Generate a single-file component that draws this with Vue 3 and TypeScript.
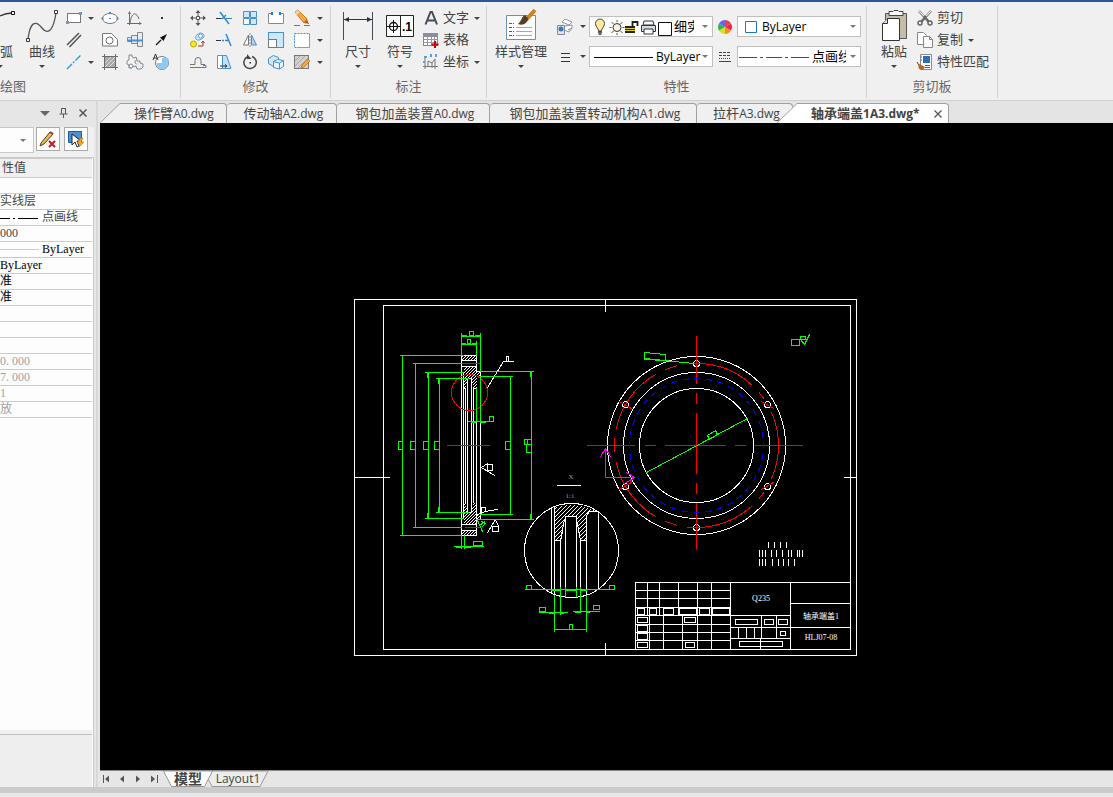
<script setup lang="ts">
import { ref } from 'vue'

interface Tool { name: string; icon: string; menu?: boolean }
interface DocTab { title: string; file: string; width: number }
interface Prop { text: string; kind?: 'dash' | 'solid'; tone?: 'dark' | 'dim' }

const grey = 'fill="none" stroke="#6b6b6b"'
const blue = 'fill="none" stroke="#2f86d6"'

const drawTools: Tool[] = [
  { name: '矩形', menu: true, icon: `<rect x="3.500" y="5.500" width="13" height="9" fill="#fff" stroke="#777"/><path d="M2 13h3v3h-3zM15 4h3v3h-3z" fill="#7a94b0"/>` },
  { name: '椭圆', icon: `<ellipse cx="10" cy="10.500" rx="7.500" ry="5" fill="#fff" stroke="#777"/><path d="M9 4h2v2h-2zM1.500 9.500h2v2h-2zM16.500 9.500h2v2h-2zM9 10h2v1h-2z" fill="#4a80b8"/>` },
  { name: '函数曲线', icon: `<path d="M4.500 4v13M2 15.500h14M5 15c2-13 7-10 9-4" ${grey}/><path d="M3 6l1.500-3L6 6zM14 14l3 1.500-3 1.500z" fill="#6b6b6b"/>` },
  { name: '点', icon: `<path d="M10 9h2v2h-2z" fill="#333"/>` },
  { name: '平行线', icon: `<path d="M3 15L15 3M5.500 17L17 5" fill="none" stroke="#555" stroke-width="1.500"/>` },
  { name: '局部放大', icon: `<path d="M2.500 3.500h9l6 6v6.500h-15z" fill="#fff" stroke="#777"/><circle cx="9.500" cy="10.500" r="3.500" ${grey}/>` },
  { name: '轴', icon: `<path d="M2.500 7.500h4v-2h6v-3h5v14h-5v-3h-6v-2h-4z" fill="#e4ecf4" stroke="#888"/><path d="M3 10.500h15" stroke="#4a90d4" stroke-width="2"/><path d="M6.500 7v5M12.500 5v9" stroke="#777"/>` },
  { name: '箭头', icon: `<path d="M5 15l5-5" stroke="#222" stroke-width="1.500"/><path d="M16 4l-7 3.500 3.500 3.500z" fill="#111"/>` },
  { name: '中心线', menu: true, icon: `<path d="M3 17L17 3" fill="none" stroke="#1f9bd8" stroke-width="1.300" stroke-dasharray="7 1.500 2 1.500"/>` },
  { name: '剖面线', icon: `<rect x="4.500" y="4.500" width="11" height="11" fill="#a8a8a8" stroke="#888"/><path d="M2 4.500h16M2 15.500h16M4.500 2v16M15.500 2v16" stroke="#6b6b6b"/><path d="M5 11l6-6M5 15l10-10M9 15l6-6" stroke="#eee" stroke-width=".8"/>` },
  { name: '齿轮', icon: `<path d="M4 3h3v2l2 1 2-1 1 3-2 1v2l2 1-2 3-2-1-1 2h-3v-3l-2-1v-3l2-1z" fill="#f5f5f5" stroke="#888"/><path d="M12 9h3v2l3 1v3l-2 2h-4l-1-3" fill="#e6eef6" stroke="#888"/><circle cx="6" cy="14" r="2" fill="#fff" stroke="#888"/>` },
  { name: '文字填充', icon: `<circle cx="11" cy="11" r="6.500" fill="#fff" stroke="#777"/><path d="M11 6v5h-5.500a6 6 0 0 0 12 1V6z" fill="#8fc9ef"/><path d="M2 8l2.500-6L7 8M3 6h3" fill="none" stroke="#333"/>` },
]

const editTools: Tool[] = [
  { name: '移动', icon: `<path d="M10 2l2.500 3h-5zM10 18l2.500-3h-5zM2 10l3-2.500v5zM18 10l-3-2.500v5z" fill="#555"/><path d="M8.500 8.500h3v3h-3z" fill="#fff" stroke="#555"/><path d="M10 5v3M10 12v3M5 10h3M12 10h3" stroke="#555"/>` },
  { name: '裁剪', icon: `<path d="M2 10.500h6M12 10.500h6" stroke="#2f86d6"/><path d="M2 10.500h5" stroke="#333"/><path d="M6 4l9 12M8 11l4-4" stroke="#2f86d6" stroke-width="1.500" fill="none"/>` },
  { name: '阵列', icon: `<path d="M3.500 3.500h6v6h-6zM10.500 3.500h6v6h-6zM10.500 10.500h6v6h-6z" fill="#cce8fa" stroke="#4a90c4"/><path d="M3.500 10.500h6v6h-6z" fill="#fff" stroke="#4a90c4"/>` },
  { name: '打断', icon: `<path d="M6 5.500H2.500v10h15v-10H14" fill="#fff" stroke="#8a8a8a"/><path d="M5 4h2v3h-2zM13 4h2v3h-2z" fill="#1f78c8"/>` },
  { name: '删除', menu: true, icon: `<path d="M3 4l3-2 9 9-3 4z" fill="#f5a93b" stroke="#c47b1a"/><path d="M3 4l3-2 2 2-3 3z" fill="#e8d2b0"/><path d="M12 15l3-4 2 5z" fill="#b5651d"/><path d="M2 17.500h6M12 17.500h6" stroke="#777"/>` },
  { name: '平移复制', icon: `<circle cx="5.500" cy="14" r="3" fill="#f6ea1c" stroke="#b5a800"/><path d="M8 9c-1-4 1-4 4-6 4 0 5 3 3 5-3 2-5 3-7 1z" fill="#d4ebfa" stroke="#5a9fd0"/><circle cx="12.500" cy="6" r="2" fill="#fff" stroke="#5a9fd0"/><path d="M10 16h5v-4M13.500 13l1.500-2 1.500 2" fill="none" stroke="#a33"/>` },
  { name: '延伸', icon: `<path d="M2 10.500h5" stroke="#333"/><path d="M8 10.500h2M11 10.500h3" stroke="#2f86d6" stroke-width="1.500"/><path d="M12 4l5 12" stroke="#2f86d6" stroke-width="1.500"/>` },
  { name: '镜像', icon: `<path d="M8.500 5v10h-5z" fill="#f8f8f8" stroke="#777"/><path d="M11.500 5v10h5z" fill="#a9d4f2" stroke="#4a90c4"/><path d="M10 3v14" stroke="#888" stroke-dasharray="2 1"/>` },
  { name: '缩放', icon: `<rect x="2.500" y="2.500" width="15" height="15" fill="#cce8fa" stroke="#4a90c4"/><rect x="2.500" y="9.500" width="8" height="8" fill="#fff" stroke="#777"/>` },
  { name: '拉伸', menu: true, icon: `<rect x="2.500" y="3.500" width="15" height="14" fill="#fff" stroke="#4a90d4" stroke-dasharray="2 1"/><path d="M5 17.500h12.500V6" fill="none" stroke="#999"/>` },
  { name: '等距线', icon: `<path d="M2 12.500h5V8.500a3 3 0 0 1 6 0v4h4" fill="none" stroke="#777"/><path d="M2 15.500h16v-2h-3" ${blue}/>` },
  { name: '偏移', icon: `<path d="M3.500 3.500h5v13h-5z" fill="#fff" stroke="#888"/><path d="M8.500 3.500h4l4.500 13h-8.500z" fill="#bfe0f6" stroke="#4a90c4"/><path d="M6 14h7M11 12.500l2 1.500-2 1.500" fill="none" stroke="#333"/>` },
  { name: '旋转', icon: `<path d="M7 5a6.200 6.200 0 1 0 5-.5" fill="none" stroke="#444" stroke-width="1.500"/><path d="M7 2v5h4.500z" fill="#444"/><path d="M9.500 10h1.500v1.500H9.500z" fill="#333"/>` },
  { name: '块', icon: `<path d="M2.500 6.500l5-3 5 2v7l-5 2-5-3z" fill="#cce8fa" stroke="#4a90c4"/><path d="M7.500 9.500l4-2 6 1v6l-4 2.500-6-1.500z" fill="#e6f4fd" stroke="#4a90c4"/><path d="M7.500 9.500l6 1.500 4-2.500M13.500 11v6" fill="none" stroke="#4a90c4"/>` },
  { name: '编辑填充', menu: true, icon: `<rect x="2.500" y="3.500" width="14" height="13" fill="#d0d0d0" stroke="#777"/><path d="M3 9l5-5M3 14l10-10M6 16l10-10" stroke="#aaa"/><path d="M10 13l6-6 2 2-6 6-3 1z" fill="#f5a93b" stroke="#b5651d" stroke-width=".7"/>` },
]

const noteTools: Tool[] = [
  { name: '文字', menu: true, icon: `<path d="M4.500 16.500L9.500 4h1.500l5 12.500M6.500 12.500h8" fill="none" stroke="#444c55" stroke-width="2"/>` },
  { name: '表格', icon: `<rect x="2.500" y="3.500" width="14" height="12" fill="#fff" stroke="#888"/><path d="M2 3h15v4H2z" fill="#8a9099"/><path d="M3 9.500h13M3 12.500h13M6.500 7v8M10.500 7v8M13.500 7v8" stroke="#999"/><path d="M14 11v7M10.500 14.500h7" stroke="#c00" stroke-width="2"/>` },
  { name: '坐标', menu: true, icon: `<path d="M4 6v11M2 14.500h15M7 14V9l4 2 3-4M11 11v5M14 7v10" fill="none" stroke="#777"/><path d="M3 4h3v2h-3zM9 2h2v3h-2zM14 2h2v3h-2zM2 9h2v2h-2z" fill="#5aa0e0"/>` },
]

const clipTools: Tool[] = [
  { name: '剪切', icon: `<path d="M4 3l10 11M16 3L6 14" stroke="#666" stroke-width="2.500"/><circle cx="5" cy="15" r="2" fill="#eee" stroke="#666" stroke-width="1.500"/><circle cx="15" cy="15" r="2" fill="#eee" stroke="#666" stroke-width="1.500"/><path d="M4 3l5 5M16 3l-5 5" stroke="#e8e8e8" stroke-width="1.200"/>` },
  { name: '复制', menu: true, icon: `<path d="M2.500 2.500h6l3 3v9h-9z" fill="#fff" stroke="#888"/><path d="M8.500 6.500h6l3 3v8h-9z" fill="#fff" stroke="#888"/><path d="M14.500 6.500v3h3" fill="none" stroke="#888"/>` },
  { name: '特性匹配', icon: `<path d="M5.500 2.500h11v15h-11z" fill="#fff" stroke="#889"/><path d="M8 4h7v7H8z" fill="#2e6fb0"/><path d="M6 5h1M6 8h1M10 13.500h5M10 15.500h5" stroke="#557"/><path d="M3 12l3 1 4 2-2 3-4-1z" fill="#b5651d"/><path d="M2 10l2 3" stroke="#7a3c08"/>` },
]

const tabs: DocTab[] = [
  { title: '操作臂', file: 'A0.dwg', width: 127 },
  { title: '传动轴', file: 'A2.dwg', width: 110 },
  { title: '钢包加盖装置', file: 'A0.dwg', width: 153 },
  { title: '钢包加盖装置转动机构', file: 'A1.dwg', width: 207 },
  { title: '拉杆', file: 'A3.dwg', width: 96 },
]

const props: Prop[] = [
  { text: '' },
  { text: '实线层' },
  { text: '点画线', kind: 'dash' },
  { text: '000' },
  { text: 'ByLayer', kind: 'solid', tone: 'dark' },
  { text: 'ByLayer', tone: 'dark' },
  { text: '准', tone: 'dark' },
  { text: '准', tone: 'dark' },
  { text: '' },
  { text: '' },
  { text: '' },
  { text: '0. 000', tone: 'dim' },
  { text: '7. 000', tone: 'dim' },
  { text: '1', tone: 'dim' },
  { text: '放', tone: 'dim' },
]

const layer = ref('细实线')
const color = ref('ByLayer')
const weight = ref('ByLayer')
const linetype = ref('点画线')

const cx = 696
const cy = 445

/* Arc on the flange face; angles run clockwise from twelve o'clock. */
function arc(r: number, from: number, to: number): string {
  const p = (a: number) => {
    const t = (a * Math.PI) / 180
    return `${(cx + r * Math.sin(t)).toFixed(1)} ${(cy - r * Math.cos(t)).toFixed(1)}`
  }
  return `M${p(from)}A${r} ${r} 0 0 1 ${p(to)}`
}

const pitchArcs = [
  [0, 42], [50, 55], [66, 114], [125, 130], [138, 186], [194, 202],
  [210, 258], [266, 275], [282, 330], [338, 346], [355, 360],
].map(([a, b]) => arc(82, a, b)).join('')

const holes = [[696, 363], [767, 404], [767, 486], [696, 527], [625, 486], [625, 404]]
const holeMarks = 'M761 401l12 7M761 489l12-7M619 489l12-7M619 401l12 7M690 363h12M690 527h12'

const noteTicks =
  [768, 774, 780, 786].map(x => `M${x} 542v5`).join('') +
  [759, 762, 765, 771, 776, 782, 788, 791, 797, 799, 802].map(x => `M${x} 550v6`).join('') +
  [759, 762, 765, 772, 778, 783, 788, 794].map(x => `M${x} 559v6`).join('')

const titleLines =
  [590, 598, 607, 615, 624, 632, 640].map(y => `M635 ${y}H730`).join('') +
  [647, 659, 678, 697, 711].map(x => `M${x} 582V615`).join('') +
  [649, 663, 682, 697, 711].map(x => `M${x} 615V649`).join('') +
  'M635 649V582H850M730 582V649M790 582V649M730 615H790M730 627H850M730 638H790M790 603H850' +
  'M761 615V638M776 615V638M738 627V638M746 627V638M754 627V638M760 638V649'

const titleBoxes = [
  [637, 608, 7, 6], [649, 608, 7, 6], [663, 608, 10, 6], [679, 608, 17, 6], [699, 608, 10, 6], [712, 608, 17, 6],
  [637, 617, 10, 5], [637, 625, 10, 6], [637, 633, 10, 6], [637, 642, 10, 5],
  [684, 617, 11, 5], [685, 642, 9, 5], [735, 619, 22, 5], [764, 619, 9, 5], [778, 619, 9, 5],
  [780, 631, 5, 4], [739, 641, 43, 5],
]

const dimBoxes = [
  [398, 441, 4, 8], [410, 441, 5, 8], [423, 441, 5, 8], [434, 441, 5, 8], [505, 441, 5, 8],
  [524, 439, 7, 5], [526, 444, 5, 8], [469, 331, 4, 4], [467, 339, 3, 4], [489, 416, 4, 5],
  [473, 541, 9, 4], [526, 585, 5, 4], [609, 585, 5, 4], [569, 624, 3, 5], [539, 607, 6, 4],
  [593, 605, 6, 4], [791, 339, 8, 6], [800, 336, 5, 3],
]
</script>

<template>
  <div class="app">
    <header class="ribbon">
      <section class="group group-draw">
        <div class="tools">
          <button class="big big-edge" type="button" aria-label="圆弧">
            <svg width="20" height="36" viewBox="0 0 20 36"><path d="M0 9C4 7 8 6 12 6" fill="none" stroke="#333" stroke-width="1.300" /><path d="M11.500 4.500h3v3h-3z" fill="#fff" stroke="#111" /></svg>
            <span>弧</span>
            <svg width="4" height="7" viewBox="0 0 4 7"><path d="M0 4h3L0 7z" fill="#444" /></svg>
          </button>
          <button class="big" type="button">
            <svg width="36" height="36" viewBox="0 0 36 36"><path d="M4 32c2-16 7-20 14-11s12-1 14-15" fill="none" stroke="#555" stroke-width="1.300" /><path d="M2.500 31.500h3v3h-3zM30.500 3.500h3v3h-3z" fill="#fff" stroke="#333" /></svg>
            <span>曲线</span><i class="caret"></i>
          </button>
          <div class="grid grid-draw">
            <template v-for="(t, i) in drawTools" :key="t.name">
              <button class="tool" type="button" :aria-label="t.name"><svg width="20" height="20" viewBox="0 0 20 20" v-html="t.icon"></svg></button>
              <span v-if="i % 4 === 0" class="drop"><i v-if="t.menu" class="caret"></i></span>
            </template>
          </div>
        </div>
        <h2>绘图</h2>
      </section>

      <section class="group group-edit">
        <div class="tools">
          <div class="grid grid-edit">
            <template v-for="(t, i) in editTools" :key="t.name">
              <button class="tool" type="button" :aria-label="t.name"><svg width="20" height="20" viewBox="0 0 20 20" v-html="t.icon"></svg></button>
              <span v-if="i % 5 === 4" class="drop"><i class="caret"></i></span>
            </template>
          </div>
        </div>
        <h2>修改</h2>
      </section>

      <section class="group group-note">
        <div class="tools">
          <button class="big" type="button">
            <svg width="36" height="36" viewBox="0 0 36 36"><path d="M3.500 5v28M32.500 5v28" stroke="#444c55" /><path d="M4 12.500h28" stroke="#333" /><path d="M4 12.500l5-2.500v5zM32 12.500l-5-2.500v5z" fill="#333" /></svg>
            <span>尺寸</span><i class="caret"></i>
          </button>
          <button class="big" type="button">
            <svg width="36" height="36" viewBox="0 0 36 36"><path d="M4.500 8.500h27v21h-27zM18.500 8v21" fill="#fff" stroke="#222" /><circle cx="11.500" cy="19.500" r="4" fill="none" stroke="#111" stroke-width="1.300" /><path d="M5 19.500h13M11.500 13v13" stroke="#111" /><text x="20" y="24" font-family="Liberation Sans, sans-serif" font-size="12" font-weight="700">.1</text></svg>
            <span>符号</span><i class="caret"></i>
          </button>
          <div class="list">
            <button v-for="t in noteTools" :key="t.name" class="row" type="button">
              <svg width="20" height="20" viewBox="0 0 20 20" v-html="t.icon"></svg><span>{{ t.name }}</span><i v-if="t.menu" class="caret"></i>
            </button>
          </div>
        </div>
        <h2>标注</h2>
      </section>

      <section class="group group-prop">
        <div class="tools">
          <button class="big big-wide" type="button">
            <svg width="36" height="36" viewBox="0 0 36 36"><path d="M3.500 8.500h29v24h-29z" fill="#fff" stroke="#6a8fb0" /><path d="M6 16.500h5M6 20.500h5M6 24.500h5M6 28.500h5" stroke="#556" stroke-dasharray="3 1" /><path d="M13 20.500h16M13 24.500h16M13 28.500h16" stroke="#9ab" /><path d="M32 3L23 13" stroke="#d08020" stroke-width="4" /><path d="M25 11l-3-3c-4 2-3 6-7 9 5 2 10-1 10-6z" fill="#5a3a20" /></svg>
            <span>样式管理</span><i class="caret"></i>
          </button>
          <div class="stack">
            <div class="line">
              <button class="mini" type="button" aria-label="图层"><svg width="20" height="20" viewBox="0 0 20 20"><path d="M7 5l3-3 7 3-3 3zM7 8l3 1 7-1v3l-4 2M9 13l5 2 3-4" fill="#fff" stroke="#9098a0" /><path d="M2.500 8.500h7v9h-7z" fill="#dde6ee" stroke="#889" /><circle cx="6" cy="12" r="2.500" fill="#3a78b0" /></svg><i class="caret"></i></button>
              <label class="combo combo-left">
                <svg class="layer-state" width="84" height="20" viewBox="0 0 84 20">
                  <path d="M8.500 14c0-3-3-4-3-7.500a4.500 4.500 0 0 1 9 0c0 3.500-3 4.500-3 7.500z" fill="#ffe9a0" stroke="#444" /><path d="M8 15h4M8.500 17h3" stroke="#333" stroke-width="1.500" />
                  <circle cx="27" cy="10.500" r="4" fill="#fff3e0" stroke="#333" /><path d="M27 3v2M27 16v2M19.500 10.500h2M32.500 10.500h2M21.500 5l2 2M32.500 5l-2 2M21.500 16l2-2M32.500 16l-2-2" stroke="#553" />
                  <path d="M35 9h10v7H35z" fill="#222" /><path d="M35 11.500h10M35 13.500h10" stroke="#d8cc20" /><path d="M42.500 9V5h5v4" fill="none" stroke="#222" stroke-width="1.800" />
                  <path d="M54 4h9l1 4H53z" fill="#fff" stroke="#333" /><path d="M51.500 8.500h14v6h-14z" fill="#d8dde4" stroke="#333" /><path d="M54 12h9v5h-9z" fill="#fff" stroke="#333" />
                  <path d="M68.500 5.500h13v13h-13z" fill="#fff" stroke="#111" />
                </svg>
                <select v-model="layer" class="cut" aria-label="图层"><option>细实线</option></select>
                <i class="caret"></i>
              </label>
              <svg class="mid" width="20" height="20" viewBox="0 0 20 20"><path d="M10 10V3a7 7 0 0 1 6 3.500z" fill="#e8453c" /><path d="M10 10l6-3.500a7 7 0 0 1 0 7z" fill="#f02050" /><path d="M10 10l6 3.500A7 7 0 0 1 10 17z" fill="#f09020" /><path d="M10 10v7a7 7 0 0 1-6-3.500z" fill="#d8e020" /><path d="M10 10l-6 3.500a7 7 0 0 1 0-7z" fill="#30b840" /><path d="M10 10L4 6.500A7 7 0 0 1 10 3z" fill="#7060f0" /></svg>
              <label class="combo combo-right">
                <svg width="24" height="18" viewBox="0 0 24 18"><path d="M7.500 3.500h11v11h-11z" fill="#fff" stroke="#1878c8" /></svg>
                <select v-model="color" aria-label="颜色"><option>ByLayer</option></select>
                <i class="caret"></i>
              </label>
            </div>
            <div class="line">
              <button class="mini" type="button" aria-label="线宽"><svg width="20" height="20" viewBox="0 0 20 20"><path d="M6 6.500h9M6 10.500h9M6 14.500h9" stroke="#333" /></svg><i class="caret"></i></button>
              <label class="combo combo-left">
                <svg width="66" height="18" viewBox="0 0 66 18"><path d="M4 9.500h59" stroke="#000" /></svg>
                <select v-model="weight" aria-label="线宽"><option>ByLayer</option></select>
                <i class="caret"></i>
              </label>
              <svg class="mid" width="20" height="20" viewBox="0 0 20 20"><path d="M4 5.500h12M4 8.500h12" stroke="#444" stroke-dasharray="3 1" /><path d="M4 11.500h12" stroke="#444" stroke-dasharray="1 1" /><path d="M4 14.500h12" stroke="#444" /></svg>
              <label class="combo combo-right">
                <svg width="74" height="18" viewBox="0 0 74 18"><path d="M1 9.500h18M22 9.500h3M28 9.500h16M47 9.500h3M53 9.500h18" stroke="#f00" /></svg>
                <select v-model="linetype" class="cut" aria-label="线型"><option>点画线</option></select>
                <i class="caret"></i>
              </label>
            </div>
          </div>
        </div>
        <h2>特性</h2>
      </section>

      <section class="group group-clip">
        <div class="tools">
          <button class="big" type="button">
            <svg width="36" height="36" viewBox="0 0 36 36"><path d="M9.500 6.500h21v25h-21z" fill="#c4bca8" stroke="#555" /><path d="M13 4.500h4l1-1h4l1 1h4v4H13z" fill="#fff" stroke="#444" /><path d="M11.500 11.500h12v22h-17v-17z" fill="#fff" stroke="#333" /><path d="M11.500 11.500v5h-5" fill="#ddd" stroke="#333" /></svg>
            <span>粘贴</span><i class="caret"></i>
          </button>
          <div class="list">
            <button v-for="t in clipTools" :key="t.name" class="row" type="button">
              <svg width="20" height="20" viewBox="0 0 20 20" v-html="t.icon"></svg><span>{{ t.name }}</span><i v-if="t.menu" class="caret"></i>
            </button>
          </div>
        </div>
        <h2>剪切板</h2>
      </section>
    </header>

    <div class="body">
      <aside class="side">
        <div class="side-bar">
          <button type="button" aria-label="菜单"><svg width="12" height="12" viewBox="0 0 12 12"><path d="M1 4h10L6 9z" fill="#666" /></svg></button>
          <button type="button" aria-label="固定"><svg width="12" height="12" viewBox="0 0 12 12"><path d="M3.500 6.500v-5h4v5M1.500 7h8M5.500 7v4M7.500 1v6" fill="none" stroke="#555" /></svg></button>
          <button type="button" aria-label="关闭"><svg width="12" height="12" viewBox="0 0 12 12"><path d="M2.500 2.500l7 7M9.500 2.500l-7 7" stroke="#555" stroke-width="1.500" /></svg></button>
        </div>
        <div class="side-tools">
          <label class="pick"><select aria-label="选择对象"><option></option></select><i class="caret"></i></label>
          <button class="sq" type="button" aria-label="清除"><svg width="20" height="20" viewBox="0 0 20 20"><path d="M3 14l9-11 3 2-9 10-4 2z" fill="#f5b64a" stroke="#5a4020" /><path d="M12 3l3 2" stroke="#a33" stroke-width="2" /><path d="M11 12l6 6M17 12l-6 6" stroke="#c8191e" stroke-width="2" /></svg></button>
          <button class="sq" type="button" aria-label="拾取"><svg width="20" height="20" viewBox="0 0 20 20"><path d="M2.500 2.500h13v11h-13z" fill="#4a90d4" stroke="#1d5a9c" /><path d="M6 5v11l3-3 2 5 2-1-2-5h4z" fill="#fff" stroke="#222" /><path d="M15 9l-4 5h3l-1 4 5-5h-3l2-4z" fill="#f8a820" stroke="#c87000" stroke-width=".6" /></svg></button>
        </div>
        <div class="side-panel">
          <table class="props">
            <thead><tr><th scope="col">性值</th></tr></thead>
            <tbody>
              <tr v-for="(p, i) in props" :key="i">
                <td :class="p.tone">
                  <div class="cell">
                    <svg v-if="p.kind === 'dash'" width="42" height="15" viewBox="0 0 42 15"><path d="M0 8.500h10M13 8.500h2M18 8.500h20" stroke="#000" /></svg>
                    <svg v-if="p.kind === 'solid'" width="42" height="15" viewBox="0 0 42 15"><path d="M0 7.500h39" stroke="#ccc" /></svg>
                    <span>{{ p.text }}</span>
                  </div>
                </td>
              </tr>
            </tbody>
          </table>
          <div class="side-help"></div>
        </div>
      </aside>

      <main class="work">
        <nav class="tabs">
          <svg class="slant" width="20" height="20" viewBox="0 0 20 20"><path d="M0 20L20 0v20z" fill="#f0f0f0" /><path d="M0 20L20 .5" fill="none" stroke="#a0a0a0" /></svg>
          <button v-for="(t, i) in tabs" :key="i" class="tab" :class="'tab-' + i" type="button" :style="{ width: t.width + 'px' }">
            <span>{{ t.title }}</span><small>{{ t.file }}</small>
          </button>
          <div class="active">
            <svg class="slant" width="20" height="20" viewBox="0 0 20 20"><path d="M0 20L20 0v20z" fill="#fff" /><path d="M0 20L20 .5" fill="none" stroke="#a0a0a0" /></svg>
            <div class="tab tab-active">
              <button type="button"><span>轴承端盖</span><small>1A3.dwg*</small></button>
              <button class="close" type="button" aria-label="关闭"><svg width="10" height="10" viewBox="0 0 10 10"><path d="M1.500 1.500l7 7M8.500 1.500l-7 7" stroke="#555" stroke-width="1.300" /></svg></button>
            </div>
          </div>
        </nav>

        <div class="canvas">
          <svg class="drawing" viewBox="100 123 1013 647" shape-rendering="crispEdges">
            <defs>
              <pattern id="hatch" width="4" height="4" patternUnits="userSpaceOnUse" patternTransform="translate(-.5 -.5)"><path d="M3 0h1v1h-1zM2 1h1v1h-1zM1 2h1v1h-1zM0 3h1v1h-1z" fill="#fff" /></pattern>
              <pattern id="hatch-fine" width="3" height="3" patternUnits="userSpaceOnUse" patternTransform="translate(-.5 -.5)"><path d="M2 0h1v1h-1zM1 1h1v1h-1zM0 2h1v1h-1z" fill="#fff" /></pattern>
            </defs>
            <g transform="translate(.5 .5)" fill="none" stroke-linecap="square">
              <g stroke="#fff">
                <rect x="354" y="299" width="502" height="356" />
                <rect x="383" y="305" width="467" height="344" />
                <path d="M605 299v12M605 643v12M354 477h35M844 477h12" />
              </g>

              <!-- section view -->
              <path d="M461 355h15v5h-15zM461 530h15v5h-15zM463 366h13v5h4v5h-4v12h-3l-2-10h-4l-2 10h-2zM463 524h13v-5h4v-5h-4v-12h-3l-2 10h-4l-2-10h-2z" fill="url(#hatch-fine)" />
              <g stroke="#fff">
                <path d="M461 355h15v16h4v17M461 355v180h15v-114M480 423v96h-4M461 360h15M461 366h15M461 524h15M461 530h15M463 372v146M465 388v114M467 378v134M471 378v134M473 388v114M467 378h4M467 512h4M463 388h2M473 388h3" />
                <path d="M487 387l16-26h10M506 356h2v5h-2zM487 463l-6 4 13 8M487 463v8M488 464h4v6h-4M477 514l8-3 12-2M481 512v-5h4v4M487 532l8-13 3 7M492 526h6v5h-6z" />
              </g>
              <path d="M461 363h19M465 527h15M447 445h42" stroke="#f00" />
              <circle cx="469" cy="392" r="18" stroke="#f00" />
              <g stroke="#0f0">
                <path d="M402 355v180M400 355h63M400 535h61M415 363v164M413 363h48M413 527h48M428 372v146M425 372h38M425 518h38M439 378v134M436 378h32M436 512h32" />
                <path d="M510 376v138M480 376h32M480 514h32M531 371v148M480 371h53M476 519h57M527 439v5" />
                <path d="M461 333v22M480 333v38M476 341v14M461 336h19M461 344h15M476 388v33M480 376v45M468 421h24M461 535v13M464 535v13M454 546h29M477 520l5 11M479 525l5-4M481 521l4 2-3 3" />
                <path d="M427 373v4M427 513v5M438 379v4M438 507v5M530 372v4M530 514v5M462 335h4M475 335h4M462 343h3M472 343h3M471 422h4M480 422h5M456 547h4M465 547h5" />
              </g>

              <!-- enlarged detail -->
              <path d="M554 507Q571 501 595 510L589 511 586 515V540H580L576 516H565L561 540H554Z" fill="url(#hatch)" />
              <g stroke="#fff">
                <circle cx="571" cy="550" r="47" />
                <path d="M551 507v85M554 507v88M560 540v57M565 516v81M576 516v81M580 540v57M586 515v80M598 512v77M565 516h11M554 540h6l4-21M586 540h-6l-4-21M586 515l3-4 9 0M557 485h23" />
              </g>
              <path d="M525 589h89M554 595v36M586 595v36M554 629h32M560 587v27M580 587v25M539 612h28M573 611h26M565 587v9M576 587v9M551 590h9M565 590h11M580 590h6M549 613h5M560 613h3M575 612h5M586 612h3" stroke="#0f0" />

              <!-- flange face -->
              <g stroke="#fff">
                <circle :cx="cx" :cy="cy" r="89" />
                <circle :cx="cx" :cy="cy" r="73" />
                <circle :cx="cx" :cy="cy" r="57" />
                <circle v-for="(h, i) in holes" :key="i" :cx="h[0]" :cy="h[1]" r="3" />
              </g>
              <path :d="pitchArcs + holeMarks" stroke="#f00" />
              <path d="M696 336v47M696 393v10M696 413v60M696 483v10M696 503v46M587 445h47M645 445h10M665 445h60M735 445h10M755 445h47" stroke="#f00" />
              <circle :cx="cx" :cy="cy" r="67" stroke="#00f" stroke-linecap="butt" stroke-dasharray="6 5.700" stroke-dashoffset="3" />
              <path d="M646 472L747 418M707 435l8-5 2 4-8 5zM644 352l21 2v6l-21-2zM644 359l20 1 29 3M800 339l4 5 5-10" stroke="#0f0" />
              <path d="M605 449v28h29M600 456l5-8 5 8M626 472l8 5-8 5" stroke="#f0f" />

              <g stroke="#0f0"><rect v-for="(b, i) in dimBoxes" :key="i" :x="b[0]" :y="b[1]" :width="b[2]" :height="b[3]" /></g>
              <path :d="noteTicks + titleLines" stroke="#fff" />
              <g stroke="#fff"><rect v-for="(b, i) in titleBoxes" :key="i" :x="b[0]" :y="b[1]" :width="b[2]" :height="b[3]" /></g>
            </g>
            <g class="cad-text" text-anchor="middle">
              <text x="571" y="479" class="faint">X</text>
              <text x="570" y="498" class="faint">1:1</text>
              <text x="761" y="601">Q235</text>
              <text x="821" y="619">轴承端盖1</text>
              <text x="821" y="640">HLJ07-08</text>
            </g>
          </svg>
        </div>

        <nav class="sheets">
          <button type="button" aria-label="首页"><svg width="10" height="10" viewBox="0 0 10 10"><path d="M2.500 1v8" stroke="#555" /><path d="M8 1.500v7L4 5z" fill="#555" /></svg></button>
          <button type="button" aria-label="上一页"><svg width="10" height="10" viewBox="0 0 10 10"><path d="M7 1.500v7L3 5z" fill="#555" /></svg></button>
          <button type="button" aria-label="下一页"><svg width="10" height="10" viewBox="0 0 10 10"><path d="M3 1.500v7L7 5z" fill="#555" /></svg></button>
          <button type="button" aria-label="末页"><svg width="10" height="10" viewBox="0 0 10 10"><path d="M2 1.500v7L6 5z" fill="#555" /><path d="M8.500 1v8" stroke="#555" /></svg></button>
          <button class="sheet sheet-on" type="button">
            <svg width="50" height="17" viewBox="0 0 50 17"><path d="M.5 0l8 15.500h33l8-15.500z" fill="#fff" stroke="#999" /></svg><span>模型</span>
          </button>
          <button class="sheet sheet-off" type="button">
            <svg width="62" height="17" viewBox="0 0 62 17"><path d="M5 0L1 8l4 7.500h48l8-15.500z" fill="#ececec" stroke="#999" /></svg><span>Layout1</span>
          </button>
        </nav>
      </main>
    </div>
    <footer class="status"></footer>
  </div>
</template>

<style>
html, body { margin: 0; background: #e6e6e6; }
</style>

<style scoped>
.app {
  display: flex;
  flex-direction: column;
  height: 100vh;
  overflow: hidden;
  background: #e6e6e6;
  font-family: "Open Sans", "Noto Sans CJK SC", sans-serif;
  font-size: 13px;
  color: #444;
}
button, select {
  margin: 0;
  padding: 0;
  border: 0;
  background: none;
  font: inherit;
  color: inherit;
  appearance: none;
}
svg { display: block; flex: none; }
.caret {
  flex: none;
  width: 0;
  height: 0;
  border: 3px solid transparent;
  border-top-color: #444;
  border-bottom-width: 0;
}

.ribbon {
  display: flex;
  flex: none;
  padding-top: 4px;
  border-top: 2px solid #2b579a;
  border-bottom: 1px solid #d0d0d0;
  background: #f0f0f0;
}
.group {
  flex: none;
  box-sizing: border-box;
  height: 92px;
  margin-bottom: 2px;
  border-right: 1px solid #d2d2d2;
}
.group h2 {
  margin: 3px 0 0;
  font-size: 13px;
  font-weight: 400;
  line-height: 20px;
  text-align: center;
  color: #666;
}
.tools { display: flex; height: 66px; padding-top: 1px; }
.group-draw { width: 335px; margin-left: -154px; }
.group-draw .tools { justify-content: flex-end; padding-right: 6px; }
.group-edit { width: 150px; }
.group-edit .tools { padding-left: 4px; }
.group-note { width: 156px; }
.group-note .tools { padding-left: 6px; }
.group-prop { width: 380px; }
.group-prop .tools { padding-left: 8px; }
.group-clip { width: 131px; }
.group-clip .tools { padding-left: 6px; }

.big {
  display: flex;
  flex: none;
  flex-direction: column;
  align-items: center;
  width: 42px;
  white-space: nowrap;
}
.big span { line-height: 16px; }
.big .caret { margin-top: 6px; }
.group-draw .big { width: 44px; }
.group-draw .big-edge { align-items: flex-start; width: 20px; }
.big-edge svg + span + svg { margin-top: 2px; }
.big-wide { width: 52px; }

.grid { display: grid; grid-auto-rows: 22px; }
.grid-draw { grid-template-columns: 20px 14px 24px 26px 26px; }
.grid-edit { grid-template-columns: repeat(5, 26px) 10px; }
.tool, .drop { display: flex; align-items: center; justify-content: center; }

.row { display: flex; align-items: center; height: 22px; gap: 2px; }
.row span { padding-bottom: 4px; }
.row .caret { margin-left: 3px; }
.list { display: flex; flex-direction: column; align-items: flex-start; }

.stack { display: flex; flex: 1; flex-direction: column; gap: 9px; min-width: 0; padding: 9px 5px 0 8px; }
.line { display: flex; align-items: center; height: 21px; }
.mini { display: flex; flex: none; align-items: center; gap: 5px; width: 34px; }
.mid { margin: 0 2px; }
.combo {
  display: flex;
  align-items: center;
  box-sizing: border-box;
  height: 21px;
  overflow: hidden;
  border: 1px solid #c0c0c0;
  background: #fff;
  color: #000;
  font-size: 12px;
}
.combo-left { flex: none; width: 124px; }
.combo-right { flex: 1; min-width: 0; }
.combo select { flex: 1; min-width: 0; height: 19px; text-overflow: clip; }
.combo .cut { padding-bottom: 2px; font-size: 13px; }
.layer-state + .cut { margin-right: 8px; }
.combo-right .cut { margin-right: 4px; }
.combo .caret, .pick .caret { margin-right: 4px; border-top-color: #777; }

.body { display: flex; flex: 1; min-height: 0; }
.side {
  display: flex;
  flex: none;
  flex-direction: column;
  box-sizing: border-box;
  width: 100px;
  padding-right: 6px;
  background: linear-gradient(to left, #e6e6e6 2px, #d8d8d8 2px, #d8d8d8 4px, #e6e6e6 4px);
}
.side-bar { display: flex; justify-content: flex-end; gap: 7px; padding: 6px 5px 8px 0; }
.side-tools { display: flex; gap: 4px; padding-bottom: 4px; background: #f0f0f0; }
.pick {
  display: flex;
  align-items: center;
  justify-content: flex-end;
  box-sizing: border-box;
  width: 34px;
  height: 26px;
  border: 1px solid #c8c8c8;
  border-left: 0;
  background: #fdfdfd;
}
.pick select { flex: 1; min-width: 0; }
.pick .caret { margin-right: 7px; }
.sq {
  display: flex;
  align-items: center;
  justify-content: center;
  box-sizing: border-box;
  width: 24px;
  height: 24px;
  border: 1px solid #aaa;
  background: #fff;
}
.sq:first-of-type { margin-left: -2px; }
.side-panel {
  display: flex;
  flex: 1;
  flex-direction: column;
  overflow: hidden;
  padding-right: 1px;
  border-top: 1px solid #c8c8c8;
  border-right: 1px solid #c8c8c8;
  background: #fdfdfd;
}
.props { width: 100%; border-collapse: collapse; table-layout: fixed; font: 12px/15px "Liberation Serif", "Noto Sans CJK SC", serif; }
.props th { height: 18px; padding: 0 0 0 2px; border-top: 1px solid #ccc; border-bottom: 1px solid #ccc; background: #f0f0f0; font-weight: 400; text-align: left; }
.props td { height: 15px; padding: 0; border-bottom: 1px solid #ccc; }
.cell { display: flex; align-items: center; height: 15px; white-space: nowrap; }
.dark { color: #000; }
.dim { color: #a0a0a0; }
.side-help { box-sizing: border-box; height: 57px; margin-top: auto; border-top: 4px solid #f0f0f0; background: linear-gradient(#c0c0c0 1px, #eee 1px); }

.work { display: flex; flex: 1; flex-direction: column; min-width: 0; }
.tabs { display: flex; flex: none; align-items: flex-end; height: 22px; background: #e4e4e4; }
.slant { z-index: 1; }
.tab {
  flex: none;
  box-sizing: border-box;
  height: 20px;
  padding-left: 4px;
  border-top: 1px solid #a0a0a0;
  border-right: 1px solid #a0a0a0;
  border-radius: 0 4px 0 0;
  background: #f0f0f0;
  line-height: 18px;
  white-space: nowrap;
  text-align: center;
}
.tab small { font-size: 12px; }
.tab + .tab { border-radius: 4px 4px 0 0; }
.tab-0 { max-width: 107px; padding-left: 2px; }
.active { display: flex; z-index: 1; margin-left: -16px; }
.tab-active { display: flex; align-items: center; gap: 13px; padding: 0 5px 0 14px; background: #fff; font-weight: 700; }
.canvas { flex: 1; min-height: 0; background: #000; }
.drawing { width: 100%; height: 100%; }
.cad-text { fill: #fff; font: 8px "Liberation Serif", "Noto Sans CJK SC", serif; }
.faint { fill: #999; font-size: 7px; }

.sheets { display: flex; flex: none; align-items: center; gap: 6px; height: 16px; padding-left: 1px; border-top: 1px solid #888; }
.sheet { display: grid; place-items: center; height: 16px; line-height: 14px; }
.sheet > * { grid-area: 1 / 1; }
.sheet span { z-index: 1; padding-bottom: 2px; }
.sheet-on { z-index: 1; margin-left: -2px; font-size: 14px; font-weight: 700; }
.sheet-off { margin-left: -12px; font-size: 12px; }
.status { flex: none; height: 4px; border-top: 6px solid #cbcbcb; background: #e6e6e6; }
</style>
